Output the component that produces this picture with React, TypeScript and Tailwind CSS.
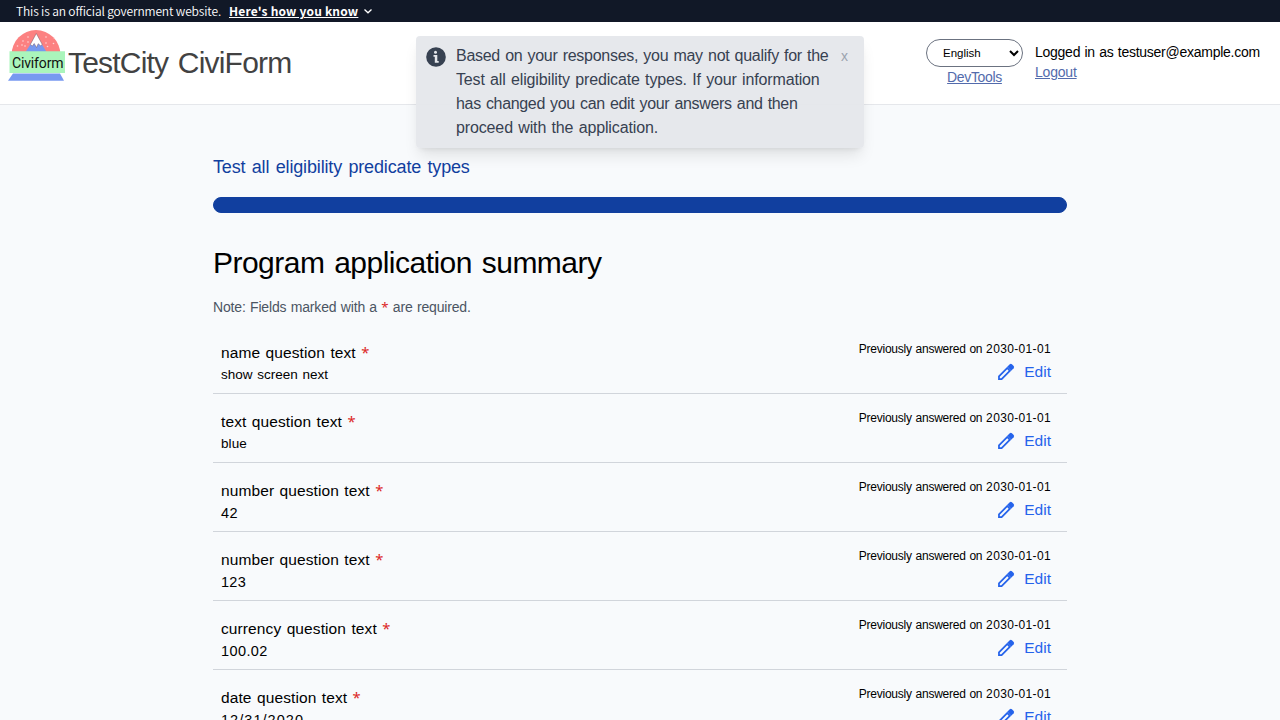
const rows = [
  ['name question text', 'show screen next', 'text-[13.5px] [word-spacing:1px]'],
  ['text question text', 'blue', 'text-[13.5px] tracking-[0.1px]'],
  ['number question text', '42', 'text-[14.5px] tracking-[0.5px]'],
  ['number question text', '123', 'text-[14.5px] tracking-[0.3px]'],
  ['currency question text', '100.02', 'text-[14.5px] tracking-[0.4px]'],
  ['date question text', '12/31/2020', 'text-[14.5px] tracking-[1.05px]'],
];

function Logo() {
  return (
    <svg className="h-[60px] w-[60px] shrink-0" viewBox="0 0 60 60">
      <path d="M3.5 25a24.5 25 0 0 1 49 0z" fill="#fc8181" />
      <path d="M17.500 22 24 12h8.500L38.500 22z" fill="#7799f0" />
      <path d="M22.300 14.500 28.300 3.500l6 11-1.800 1.200-2.300-2-1.700 3.800-2.300-4-1.800 2.500z" fill="#fff" stroke="#765b67" strokeWidth=".5" />
      <g fill="#ffd5d5">
        <circle cx="15" cy="11" r=".8" /><circle cx="20" cy="7" r=".8" /><circle cx="20" cy="12" r=".8" />
        <circle cx="9.500" cy="16" r=".8" /><circle cx="14" cy="15" r=".8" /><circle cx="17" cy="16" r=".8" />
        <circle cx="38" cy="7" r=".8" /><circle cx="38" cy="13" r=".8" /><circle cx="45.500" cy="13.500" r=".8" />
        <circle cx="46" cy="8" r=".6" /><circle cx="39.500" cy="16.500" r=".8" />
      </g>
      <path d="M5 43.500h47l4 7.300H0z" fill="#7799f0" />
      <path d="M1.500 21.300H57V43H1.500z" fill="#aaf5bb" />
      <text className="text-[14px] tracking-[-0.15px]" x="4" y="37.500" fill="#111" fontFamily="Roboto, sans-serif">Civiform</text>
    </svg>
  );
}

function Pencil() {
  return (
    <svg className="h-5 w-5" viewBox="0 0 24 24" fill="currentColor">
      <path fillRule="evenodd" d="M2.500 16.800V21.500h4.700L18.200 10.500l-4.700-4.700zM6.300 19.400H4.600v-1.700l8.900-8.900 1.700 1.700z" />
      <path d="m13.500 5.800 3-3a2 2 0 0 1 2.600 0l2.100 2.100a2 2 0 0 1 0 2.600l-3 3z" />
    </svg>
  );
}

function Star() {
  return <span className="font-['Noto_Sans',sans-serif] text-[0.95em] leading-none text-[#dc2626]">*</span>;
}

function Row({ q, a, spacing }: { q: string; a: string; spacing: string }) {
  return (
    <div className="flex h-[69px] justify-between border-b border-[#d1d5db] pr-4 pl-2">
      <div className="pt-4">
        <div className="text-[15.5px] leading-6 tracking-[0.1px] [word-spacing:1px]">{q} <Star /></div>
        <div className={`leading-5 ${spacing}`}>{a}</div>
      </div>
      <div className="flex flex-col items-end pt-4">
        <div className="text-[12px] leading-4 tracking-[-0.24px] [word-spacing:0.7px]">Previously answered on <span className="tracking-[0.35px]">2030-01-01</span></div>
        <a className="mt-px flex h-7 items-center gap-2 text-[#2563eb]"><Pencil /><span className="text-[15.5px]">Edit</span></a>
      </div>
    </div>
  );
}

export default function App() {
  return (
    <div className="relative h-[720px] overflow-hidden bg-[#f8fafc] font-['Liberation_Sans',Arial,sans-serif] text-black">
      <div className="flex h-[22px] items-center bg-[#111827] pl-4 font-['Noto_Sans_CJK_SC',sans-serif] text-[12px] text-white">
        <span className="font-[350] tracking-[-0.14px]">This is an official government website.</span>
        <span className="ml-2 font-bold tracking-[0.18px] underline">Here's how you know</span>
        <svg className="ml-1.5 h-2 w-2" viewBox="0 0 8 8" fill="none" stroke="currentColor" strokeWidth="1.300"><path d="m.5 2.500 3.500 3.300L7.500 2.500" /></svg>
      </div>
      <header className="flex h-[83px] justify-between border-b border-[#e5e7eb] bg-white pr-5 pl-2">
        <div className="flex pt-2">
          <Logo />
          <h1 className="mt-[15px] text-[30px] leading-9 tracking-[-0.8px] text-[#424242] [word-spacing:2px]">TestCity CiviForm</h1>
        </div>
        <div className="flex gap-3 pt-[17px]">
          <div className="flex w-[97px] flex-col items-center">
            <select className="h-7 w-full rounded-full border border-[#6b7280] bg-white pl-3 text-[11.5px]"><option>English</option></select>
            <a className="text-[14px] leading-5 tracking-[-0.35px] text-[#536bac] underline">DevTools</a>
          </div>
          <div className="w-[225px] pt-[3px] text-[14px] leading-5 whitespace-nowrap">
            <div className="tracking-[-0.26px] [word-spacing:0.7px]">Logged in as testuser@example.com</div>
            <a className="tracking-[-0.2px] text-[#536bac] underline">Logout</a>
          </div>
        </div>
      </header>
      <main className="mx-auto w-[854px]">
        <h2 className="pt-12 text-[18px] leading-7 tracking-[-0.15px] text-[#113f9f] [word-spacing:1.5px]">Test all eligibility predicate types</h2>
        <div className="mt-4 h-4 rounded-full border border-[#113f9f] bg-[#113f9f]" />
        <h1 className="mt-8 text-[30px] leading-9 tracking-[-0.52px] [word-spacing:2px]">Program application summary</h1>
        <p className="mt-4 text-[14px] leading-5 tracking-[-0.16px] text-[#4b5563] [word-spacing:0.6px]">Note: Fields marked with a <Star /> are required.</p>
        <div className="mt-2">{rows.map(([q, a, spacing], i) => <Row key={i} q={q} a={a} spacing={spacing} />)}</div>
      </main>
      <div className="absolute top-9 left-[416px] flex h-28 w-[448px] rounded-sm bg-[#e5e7eb]/95 p-2 text-[#374151] shadow-lg">
        <svg className="mt-px h-6 w-6 shrink-0" viewBox="0 0 24 24"><circle cx="12" cy="12" r="9.800" fill="#374151" /><circle cx="11.500" cy="7.300" r="1.500" fill="#e5e7eb" /><path d="M9.500 10h3.800v6h1.400v1.700h-3.900v-6H9.500z" fill="#e5e7eb" /></svg>
        <p className="ml-2 text-[16px] leading-6 whitespace-nowrap [word-spacing:1px]">
          <span className="tracking-[-0.28px]">Based on your responses, you may not qualify for the</span><br />
          <span className="tracking-[-0.14px]">Test all eligibility predicate types. If your information</span><br />
          <span className="tracking-[-0.33px]">has changed you can edit your answers and then</span><br />
          <span className="tracking-[-0.13px]">proceed with the application.</span>
        </p>
        <span className="absolute top-2 right-4 text-[14px] leading-6 text-[#9ca3af]">x</span>
      </div>
    </div>
  );
}
